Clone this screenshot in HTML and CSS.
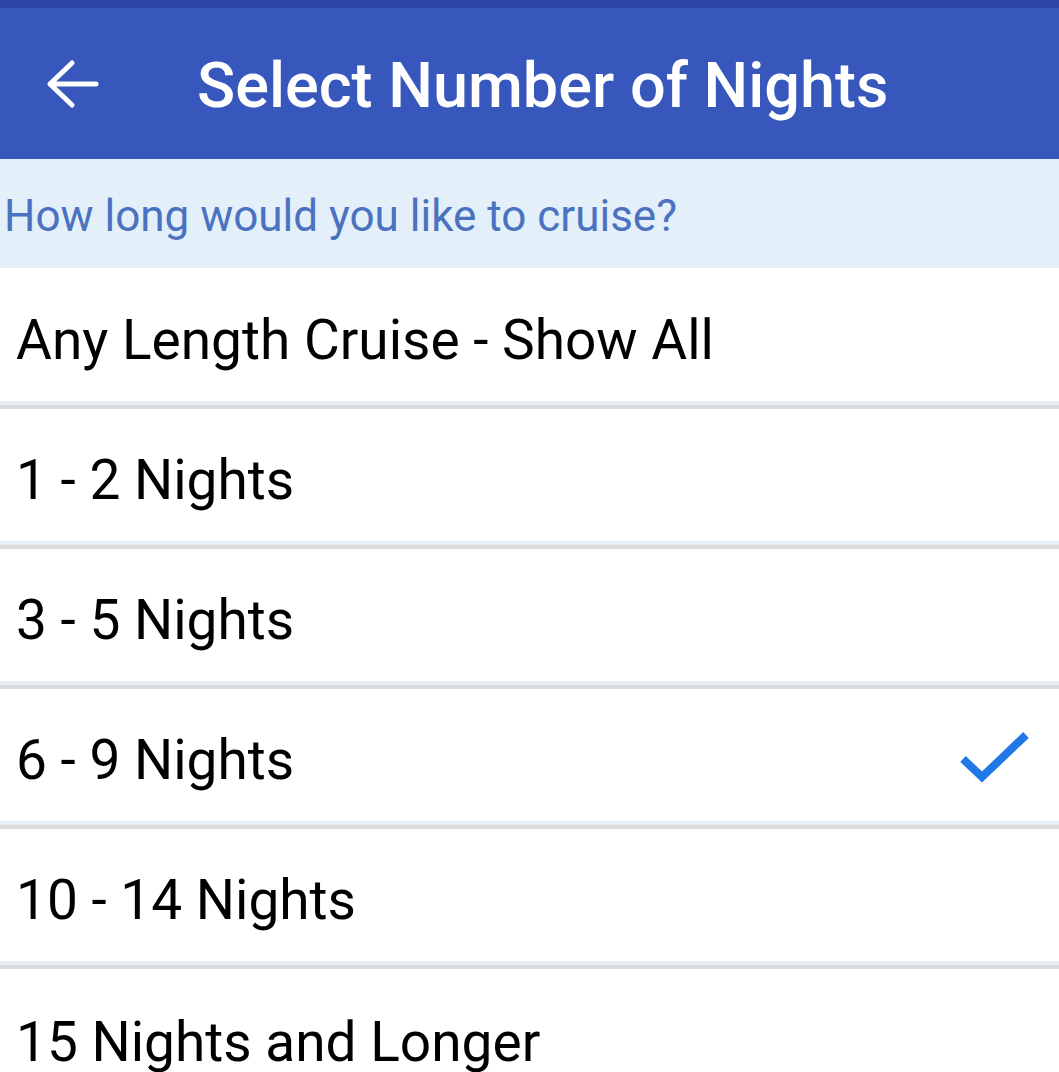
FILE: index.html
```html
<!DOCTYPE html>
<html lang="en">
<head>
    <meta charset="UTF-8">
    <meta name="viewport" content="width=device-width, initial-scale=1.0">
    <title>Select Number of Nights</title>
    <link rel="stylesheet" href="styles.css">
</head>
<body>

    <div class="status-strip"></div>

    <!-- Toolbar -->
    <header class="toolbar">
        <span class="back-btn">
            <svg width="60" height="60" viewBox="0 0 60 60">
                <path d="M4 30 H50 M4 30 L26 9 M4 30 L26 51" fill="none" stroke="#fff" stroke-width="5" stroke-linecap="round" stroke-linejoin="round"/>
            </svg>
        </span>
        <h1 class="title">Select Number of Nights</h1>
    </header>

    <div class="prompt">How long would you like to cruise?</div>

    <!-- Options -->
    <ul class="options">
        <li class="option">Any Length Cruise - Show All</li>
        <li class="option">1 - 2 Nights</li>
        <li class="option">3 - 5 Nights</li>
        <li class="option selected">6 - 9 Nights
            <svg class="check" width="72" height="54" viewBox="0 0 72 54">
                <path d="M4 27 L23 45 L67 3" fill="none" stroke="#1f78e6" stroke-width="8"/>
            </svg>
        </li>
        <li class="option">10 - 14 Nights</li>
        <li class="option">15 Nights and Longer</li>
    </ul>

</body>
</html>
```

FILE: styles.css
```css
body {
    margin: 0;
    font-family: Roboto, "Noto Sans", sans-serif;
    background: #fff;
}
.status-strip {
    height: 8px;
    background: #2c46a8;
}
.toolbar {
    height: 151px;
    background: #3757bc;
    display: flex;
    align-items: center;
}
.back-btn {
    display: flex;
    width: 60px;
    margin-left: 46px;
    margin-right: 91px;
}
.title {
    margin: 0;
    color: #fff;
    font-size: 63px;
    font-weight: 500;
    padding-top: 4px;
}
.prompt {
    height: 109px;
    background: #e3eff9;
    color: #4a72c0;
    font-size: 44px;
    display: flex;
    align-items: center;
    padding-left: 4px;
    padding-top: 4px;
    box-sizing: border-box;
}
.options {
    list-style: none;
    margin: 0;
    padding: 0;
}
.option {
    height: 140px;
    display: flex;
    align-items: center;
    justify-content: space-between;
    padding: 6px 28px 0 16px;
    box-sizing: border-box;
    font-size: 55px;
    color: #000;
    border-bottom: 4px solid #dcdcdc;
    box-shadow: inset 0 -4px 0 #e6eef6;
}
.option:first-child {
    height: 141px;
}
.option:last-child {
    border: none;
    box-shadow: none;
}
.check {
    margin-bottom: 2px;
}
```
